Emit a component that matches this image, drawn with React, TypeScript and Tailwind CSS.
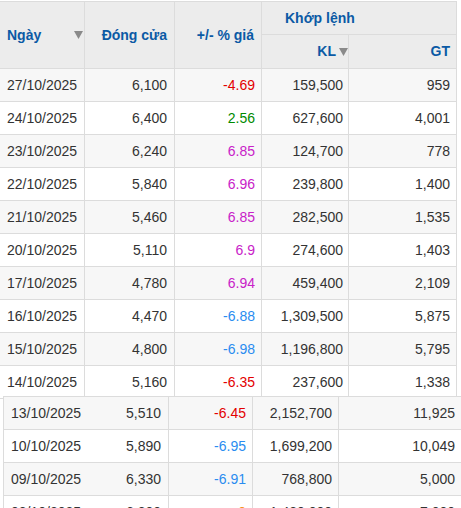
import React from "react";

type Row = {
  date: string;
  close: string;
  change: string;
  tone: "down" | "up" | "ceil" | "floor" | "ref";
  kl: string;
  gt: string;
};

const topRows: Row[] = [
  { date: "27/10/2025", close: "6,100", change: "-4.69", tone: "down", kl: "159,500", gt: "959" },
  { date: "24/10/2025", close: "6,400", change: "2.56", tone: "up", kl: "627,600", gt: "4,001" },
  { date: "23/10/2025", close: "6,240", change: "6.85", tone: "ceil", kl: "124,700", gt: "778" },
  { date: "22/10/2025", close: "5,840", change: "6.96", tone: "ceil", kl: "239,800", gt: "1,400" },
  { date: "21/10/2025", close: "5,460", change: "6.85", tone: "ceil", kl: "282,500", gt: "1,535" },
  { date: "20/10/2025", close: "5,110", change: "6.9", tone: "ceil", kl: "274,600", gt: "1,403" },
  { date: "17/10/2025", close: "4,780", change: "6.94", tone: "ceil", kl: "459,400", gt: "2,109" },
  { date: "16/10/2025", close: "4,470", change: "-6.88", tone: "floor", kl: "1,309,500", gt: "5,875" },
  { date: "15/10/2025", close: "4,800", change: "-6.98", tone: "floor", kl: "1,196,800", gt: "5,795" },
  { date: "14/10/2025", close: "5,160", change: "-6.35", tone: "down", kl: "237,600", gt: "1,338" },
];

const bottomRows: Row[] = [
  { date: "13/10/2025", close: "5,510", change: "-6.45", tone: "down", kl: "2,152,700", gt: "11,925" },
  { date: "10/10/2025", close: "5,890", change: "-6.95", tone: "floor", kl: "1,699,200", gt: "10,049" },
  { date: "09/10/2025", close: "6,330", change: "-6.91", tone: "floor", kl: "768,800", gt: "5,000" },
  { date: "08/10/2025", close: "6,800", change: "0", tone: "ref", kl: "1,480,000", gt: "7,000" },
];

const toneClass: Record<Row["tone"], string> = {
  down: "text-[#e30000]",
  up: "text-[#008a00]",
  ceil: "text-[#c822c8]",
  floor: "text-[#2a8cf0]",
  ref: "text-[#f7941d]",
};

function SortArrow() {
  return (
    <svg width="9" height="8" viewBox="0 0 9 8" className="shrink-0">
      <path d="M0 0 H9 L4.5 8 Z" fill="#8a8a8a" />
    </svg>
  );
}

export default function App() {
  return (
    <div className="w-[461px] h-[508px] overflow-hidden bg-white text-[14px] text-[#333] font-['Liberation_Sans',Arial,sans-serif]">
      {/* Main table */}
      <div className="w-[457px] mt-px border-t border-[#dcdcdc]">
        {/* Header */}
        <div className="grid grid-cols-[85px_90px_87px_87px_108px] grid-rows-[33px_33px] bg-[#ececec] font-bold text-[#0b5aa5] border-b border-[#dcdcdc]">
          <div className="row-span-2 flex items-center justify-between pl-[7px] pr-[1px] border-r border-[#dcdcdc]">
            <span>Ngày</span>
            <SortArrow />
          </div>
          <div className="row-span-2 flex items-center justify-end pr-[7px] border-r border-[#dcdcdc]">
            Đóng cửa
          </div>
          <div className="row-span-2 flex items-center justify-end pr-[7px] border-r border-[#dcdcdc]">
            +/- % giá
          </div>
          <div className="col-span-2 flex items-center pl-[23px] border-b border-r border-[#dcdcdc]">
            Khớp lệnh
          </div>
          <div className="flex items-center justify-end gap-[3px] border-r border-[#dcdcdc]">
            <span>KL</span>
            <SortArrow />
          </div>
          <div className="flex items-center justify-end pr-[6px] border-r border-[#dcdcdc]">GT</div>
        </div>

        {/* Body */}
        {topRows.map((r, i) => (
          <div
            key={r.date}
            className={`grid grid-cols-[85px_90px_87px_87px_108px] h-[33px] border-b border-[#dcdcdc] ${
              i % 2 === 0 ? "bg-[#f7f7f7]" : "bg-white"
            }`}
          >
            <div className="flex items-center pl-[7px] border-r border-[#dcdcdc]">{r.date}</div>
            <div className="flex items-center justify-end pr-[7px] border-r border-[#dcdcdc]">{r.close}</div>
            <div className={`flex items-center justify-end pr-[6px] border-r border-[#dcdcdc] ${toneClass[r.tone]}`}>
              {r.change}
            </div>
            <div className="flex items-center justify-end pr-[5px] border-r border-[#dcdcdc]">{r.kl}</div>
            <div className="flex items-center justify-end pr-[6px] border-r border-[#dcdcdc]">{r.gt}</div>
          </div>
        ))}
      </div>

      {/* Continuation table, shifted */}
      <div className="relative -mt-[3px] ml-[3px] w-[470px] border-t border-l border-[#dcdcdc] bg-white">
        {bottomRows.map((r, i) => (
          <div
            key={r.date}
            className={`grid grid-cols-[85px_80px_84px_86px_135px] h-[33px] border-b border-[#dcdcdc] ${
              i % 2 === 0 ? "bg-[#f7f7f7]" : "bg-white"
            }`}
          >
            <div className="flex items-center pl-[7px]">{r.date}</div>
            <div className="flex items-center justify-end pr-[7px] border-r border-[#dcdcdc]">{r.close}</div>
            <div className={`flex items-center justify-end pr-[6px] border-r border-[#dcdcdc] ${toneClass[r.tone]}`}>
              {r.change}
            </div>
            <div className="flex items-center justify-end pr-[6px] border-r border-[#dcdcdc]">{r.kl}</div>
            <div className="flex items-center justify-end pr-[19px]">{r.gt}</div>
          </div>
        ))}
      </div>
    </div>
  );
}
